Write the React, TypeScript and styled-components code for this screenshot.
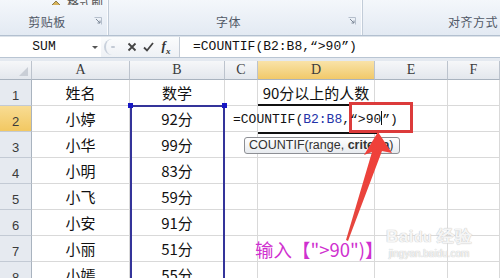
import React from "react";
import styled, { createGlobalStyle } from "styled-components";

const GlobalStyle = createGlobalStyle`
  html, body {
    margin: 0;
    padding: 0;
    background: #fff;
  }
  body {
    width: 500px;
    height: 278px;
    overflow: hidden;
    font-family: "Noto Sans CJK SC", "Noto Sans", sans-serif;
  }
`;

const Window = styled.div`
  width: 500px;
  height: 278px;
  overflow: hidden;
  display: flex;
  flex-direction: column;
  background: #fff;
`;

/* ---------- ribbon ---------- */

const Ribbon = styled.div`
  height: 35px;
  flex-shrink: 0;
  display: grid;
  grid-template-columns: 109px 254px 1fr;
  background: linear-gradient(#f4f7fb, #e3eaf3);
  border-bottom: 1px solid #b3c0d0;
`;

const Group = styled.div<{ $last?: boolean }>`
  display: flex;
  flex-direction: column;
  justify-content: space-between;
  border-right: ${(p) => (p.$last ? "none" : "1px solid #c2ccd8")};
  box-shadow: ${(p) => (p.$last ? "none" : "inset -1px 0 0 #fbfcfe")};
`;

const TopStrip = styled.div`
  height: 5px;
  overflow: hidden;
  padding-left: 50px;
  display: flex;
  align-items: flex-end;
  font-size: 12px;
  color: #555;
  line-height: 16px;
`;

const Clipped = styled.div`
  display: flex;
  gap: 5px;
  align-items: center;
  margin-bottom: -6px;
`;

const LabelRow = styled.div<{ $indent?: number }>`
  height: 20px;
  margin-bottom: 4px;
  display: flex;
  align-items: center;
  padding-left: ${(p) => p.$indent ?? 0}px;
  padding-right: 6px;
`;

const GroupLabel = styled.span<{ $grow?: boolean }>`
  flex: ${(p) => (p.$grow ? 1 : "none")};
  text-align: center;
  font-size: 12px;
  color: #505866;
  letter-spacing: 0.5px;
`;

const Launcher = () => (
  <svg width="8" height="8" viewBox="0 0 8 8">
    <path d="M0.5 0.5h7v7" fill="none" stroke="#b5bfcc" />
    <path d="M2 2l4 4M3.5 6H6V3.5" fill="none" stroke="#7d8898" />
  </svg>
);

/* ---------- formula bar ---------- */

const FormulaBar = styled.div`
  height: 20px;
  flex-shrink: 0;
  display: flex;
  background: #fff;
  border-top: 1px solid #dde3ea;
  border-bottom: 1px solid #b9c5d3;
`;

const NameBox = styled.div`
  width: 88px;
  text-align: center;
  font-family: "Liberation Mono", monospace;
  font-size: 13px;
  line-height: 20px;
  color: #111;
`;

const DropArrow = styled.div`
  width: 13px;
  display: flex;
  align-items: center;
  justify-content: center;
  &::after {
    content: "";
    border-left: 3px solid transparent;
    border-right: 3px solid transparent;
    border-top: 3px solid #555;
  }
`;

const ButtonArea = styled.div`
  width: 78px;
  display: flex;
  align-items: center;
  background: linear-gradient(#fbfcfd, #eef1f5);
  border-right: 1px solid #c4ccd6;
`;

const Grip = styled.div`
  width: 9px;
  height: 16px;
  margin-left: 3px;
  margin-right: 9px;
  border-radius: 9px 0 0 9px;
  border-left: 2px solid #c9d1dc;
  display: flex;
  align-items: center;
  justify-content: flex-end;
  &::after {
    content: "";
    width: 4px;
    height: 2px;
    background: #c3cad4;
    border-radius: 1px;
  }
`;

const BarButton = styled.div<{ $w: number }>`
  width: ${(p) => p.$w}px;
  display: flex;
  align-items: center;
  justify-content: center;
`;

const Fx = styled.span`
  font-family: "Liberation Serif", serif;
  font-style: italic;
  font-weight: bold;
  font-size: 13px;
  color: #333;
  sub {
    font-size: 9px;
  }
`;

const FormulaInput = styled.div`
  flex: 1;
  padding-left: 13px;
  font-family: "Liberation Mono", monospace;
  font-size: 13px;
  line-height: 20px;
  color: #111;
  white-space: nowrap;
`;

const Gap = styled.div`
  height: 3px;
  flex-shrink: 0;
  background: #e4e9f0;
`;

/* ---------- sheet ---------- */

const SheetWrap = styled.div`
  position: relative;
  flex: 1;
  overflow: hidden;
`;

const Sheet = styled.div`
  display: grid;
  grid-template-columns: 32px 98px 95px 33px 117px 73px 52px;
  grid-template-rows: 19px;
  grid-auto-rows: 26px;
`;

const ColHead = styled.div<{ $active?: boolean }>`
  display: flex;
  align-items: center;
  justify-content: center;
  font-family: "Liberation Serif", serif;
  font-size: 14px;
  color: #3b3b3b;
  background: ${(p) =>
    p.$active
      ? "linear-gradient(#f9e3a9, #f1c96a)"
      : "linear-gradient(#f6f7f9, #e3e7ed)"};
  border-right: 1px solid #bcc3cd;
  border-bottom: 1px solid #a9b3bf;
`;

const Corner = styled(ColHead)`
  position: relative;
  &::after {
    content: "";
    position: absolute;
    right: 3px;
    bottom: 3px;
    border-left: 9px solid transparent;
    border-bottom: 9px solid #c9ced6;
  }
`;

const RowHead = styled.div<{ $active?: boolean }>`
  display: flex;
  align-items: flex-end;
  justify-content: center;
  padding-bottom: 2px;
  box-sizing: border-box;
  font-family: "Liberation Sans", sans-serif;
  font-size: 13px;
  color: #3b3b3b;
  background: ${(p) =>
    p.$active ? "linear-gradient(#f8dc93, #f2c862)" : "#e6eaf0"};
  border-right: 1px solid #a9b3bf;
  border-bottom: 1px solid #c3cad4;
`;

const Cell = styled.div`
  display: flex;
  align-items: center;
  justify-content: center;
  font-size: 15px;
  color: #111;
  white-space: nowrap;
  border-right: 1px solid #d9d9d9;
  border-bottom: 1px solid #d9d9d9;
`;

/* ---------- overlays ---------- */

const RangeBox = styled.div`
  position: absolute;
  left: 130px;
  top: 44px;
  width: 95px;
  height: 200px;
  box-sizing: border-box;
  border: 2px solid #34349a;
`;

const Handle = styled.div<{ $x: number }>`
  position: absolute;
  left: ${(p) => p.$x}px;
  top: 42px;
  width: 5px;
  height: 5px;
  background: #1717c4;
`;

const ActiveCell = styled.div`
  position: absolute;
  left: 258px;
  top: 43px;
  width: 119px;
  height: 30px;
  box-sizing: border-box;
  border-top: 2px solid #111;
  border-bottom: 2px solid #111;
  background: #fff;
`;

const RedBox = styled.div`
  position: absolute;
  left: 349px;
  top: 41px;
  width: 64px;
  height: 31px;
  box-sizing: border-box;
  border: 3px solid #dc3b3b;
  background: #fff;
`;

const Editor = styled.div`
  position: absolute;
  left: 233px;
  top: 50px;
  font-family: "Liberation Mono", monospace;
  font-size: 13px;
  line-height: 16px;
  color: #111;
  white-space: nowrap;
`;

const RefText = styled.span`
  color: #2233a8;
`;

const Caret = styled.span`
  display: inline-block;
  width: 1px;
  height: 14px;
  background: #111;
  vertical-align: -2px;
`;

const Tip = styled.div`
  position: absolute;
  left: 244px;
  top: 76px;
  width: 156px;
  height: 17px;
  box-sizing: border-box;
  padding-left: 4px;
  border: 1px solid #8d8f94;
  border-radius: 3px;
  background: linear-gradient(#ffffff, #e8ebef);
  font-family: "Liberation Sans", sans-serif;
  font-size: 12.5px;
  line-height: 15px;
  color: #333;
  white-space: nowrap;
  b {
    font-weight: 700;
  }
`;

const Callout = styled.div`
  position: absolute;
  left: 255px;
  top: 176px;
  font-size: 18.5px;
  line-height: 24px;
  color: #cf30cf;
  white-space: nowrap;
`;

const Watermark = styled.div`
  position: absolute;
  left: 386px;
  top: 166px;
  display: flex;
  flex-direction: column;
  align-items: center;
  color: rgba(255, 255, 255, 0.85);
  text-shadow: 0 0 1px #c4c4c4, 0 0 1px #c4c4c4;
  white-space: nowrap;
`;

const Mark = styled.div`
  font-family: "Liberation Sans", sans-serif;
  font-weight: bold;
  font-size: 17px;
  line-height: 20px;
  letter-spacing: 0.5px;
  span {
    font-size: 14px;
  }
`;

const MarkUrl = styled.div`
  font-family: "Liberation Sans", sans-serif;
  font-size: 10px;
  line-height: 14px;
`;

const names = ["姓名", "小婷", "小华", "小明", "小飞", "小安", "小丽", "小嫣", ""];
const scores = ["数学", "92分", "99分", "83分", "59分", "91分", "51分", "55分", ""];
const cols = ["A", "B", "C", "D", "E", "F"];

export default function App() {
  return (
    <Window>
      <GlobalStyle />
      <Ribbon>
        <Group>
          <TopStrip>
            <Clipped>
              <svg width="12" height="12" viewBox="0 0 12 12">
                <path d="M1 9l5-5 5 5-5 2z" fill="#d7b35a" stroke="#8b7a4a" />
              </svg>
              <span>格式刷</span>
            </Clipped>
          </TopStrip>
          <LabelRow>
            <GroupLabel $grow>剪贴板</GroupLabel>
            <Launcher />
          </LabelRow>
        </Group>
        <Group>
          <TopStrip />
          <LabelRow>
            <GroupLabel $grow>字体</GroupLabel>
            <Launcher />
          </LabelRow>
        </Group>
        <Group $last>
          <TopStrip />
          <LabelRow $indent={85}>
            <GroupLabel>对齐方式</GroupLabel>
          </LabelRow>
        </Group>
      </Ribbon>

      <FormulaBar>
        <NameBox>SUM</NameBox>
        <DropArrow />
        <ButtonArea>
          <Grip />
          <BarButton $w={16}>
            <svg width="10" height="10" viewBox="0 0 10 10">
              <path d="M1.5 1.5l7 7M8.5 1.5l-7 7" stroke="#444" strokeWidth="1.8" />
            </svg>
          </BarButton>
          <BarButton $w={16}>
            <svg width="11" height="10" viewBox="0 0 11 10">
              <path d="M1 5.5l3 3 6-7.5" fill="none" stroke="#444" strokeWidth="1.8" />
            </svg>
          </BarButton>
          <BarButton $w={20}>
            <Fx>
              f<sub>x</sub>
            </Fx>
          </BarButton>
        </ButtonArea>
        <FormulaInput>=COUNTIF(B2:B8,“&gt;90”)</FormulaInput>
      </FormulaBar>
      <Gap />

      <SheetWrap>
        <Sheet>
          <Corner />
          {cols.map((c) => (
            <ColHead key={c} $active={c === "D"}>
              {c}
            </ColHead>
          ))}
          {names.map((n, i) => (
            <React.Fragment key={i}>
              <RowHead $active={i === 1}>{i + 1}</RowHead>
              <Cell>{n}</Cell>
              <Cell>{scores[i]}</Cell>
              <Cell />
              <Cell>{i === 0 ? "90分以上的人数" : ""}</Cell>
              <Cell />
              <Cell />
            </React.Fragment>
          ))}
        </Sheet>

        <RangeBox />
        <Handle $x={128} />
        <Handle $x={222} />
        <ActiveCell />
        <RedBox />
        <Editor>
          =COUNTIF(<RefText>B2:B8</RefText>,“&gt;90<Caret />”)
        </Editor>
        <Tip>
          COUNTIF(range, <b>criteria</b>)
        </Tip>
        <svg
          width="500"
          height="218"
          style={{ position: "absolute", left: 0, top: 0 }}
        >
          <defs>
            <linearGradient id="arrowFill" x1="0" y1="1" x2="0.3" y2="0">
              <stop offset="0" stopColor="#e4473f" />
              <stop offset="1" stopColor="#f0403a" />
            </linearGradient>
          </defs>
          <polygon
            points="378,71 392,92 382,90 348,180 346,179 372,91 364,94"
            fill="url(#arrowFill)"
          />
        </svg>
        <Callout>输入【"&gt;90")】</Callout>
        <Watermark>
          <Mark>
            Bai<span>du</span> 经验
          </Mark>
          <MarkUrl>jingyan.baidu.com</MarkUrl>
        </Watermark>
      </SheetWrap>
    </Window>
  );
}
